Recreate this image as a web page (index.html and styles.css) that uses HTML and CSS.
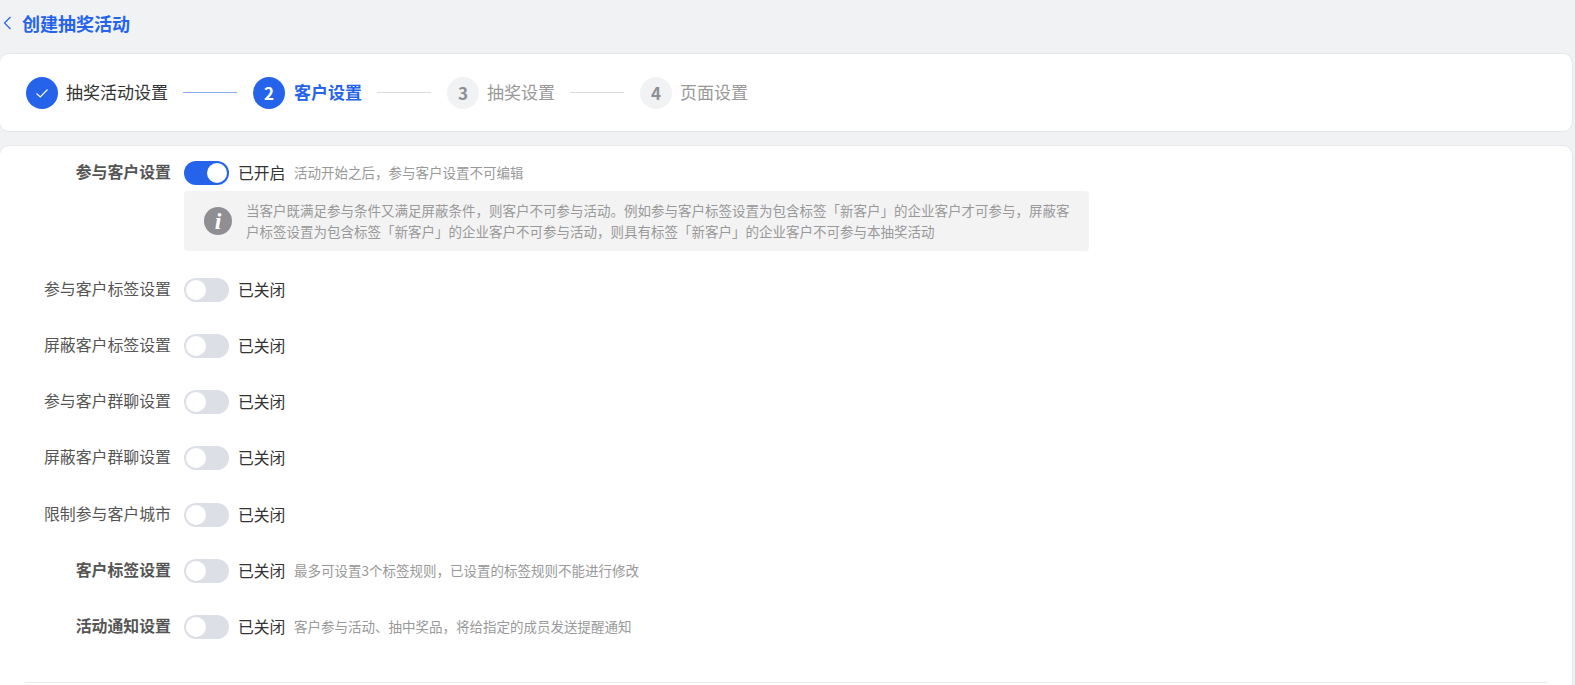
FILE: index.html
```html
<!DOCTYPE html>
<html lang="zh-CN">
<head>
<meta charset="utf-8">
<title>创建抽奖活动</title>
<link rel="stylesheet" href="styles.css">
</head>
<body>
<header class="page-head">
  <svg class="back" width="9" height="14" viewBox="0 0 9 14"><path d="M7.5 1 1.5 7l6 6" fill="none" stroke="#2563eb" stroke-width="1.2"/></svg>
  <h1 class="title">创建抽奖活动</h1>
</header>
<section class="card steps">
  <div class="step done">
    <span class="dot"><svg width="14" height="14" viewBox="0 0 14 14"><path d="M1.5 7.5 5.3 11 12.5 3.5" fill="none" stroke="#fff" stroke-width="1.1"/></svg></span>
    <span class="step-name">抽奖活动设置</span>
  </div>
  <i class="line line-on"></i>
  <div class="step active"><span class="dot">2</span><span class="step-name">客户设置</span></div>
  <i class="line"></i>
  <div class="step"><span class="dot">3</span><span class="step-name">抽奖设置</span></div>
  <i class="line"></i>
  <div class="step"><span class="dot">4</span><span class="step-name">页面设置</span></div>
</section>
<main class="card form">
  <div class="row first">
    <label class="label strong">参与客户设置</label>
    <span class="switch on"></span><span class="state">已开启</span><span class="hint">活动开始之后，参与客户设置不可编辑</span>
  </div>
  <div class="notice">
    <span class="info-icon">i</span>
    <p class="notice-text">当客户既满足参与条件又满足屏蔽条件，则客户不可参与活动。例如参与客户标签设置为包含标签「新客户」的企业客户才可参与，屏蔽客户标签设置为包含标签「新客户」的企业客户不可参与活动，则具有标签「新客户」的企业客户不可参与本抽奖活动</p>
  </div>
  <div class="row"><label class="label">参与客户标签设置</label><span class="switch"></span><span class="state">已关闭</span></div>
  <div class="row"><label class="label">屏蔽客户标签设置</label><span class="switch"></span><span class="state">已关闭</span></div>
  <div class="row"><label class="label">参与客户群聊设置</label><span class="switch"></span><span class="state">已关闭</span></div>
  <div class="row"><label class="label">屏蔽客户群聊设置</label><span class="switch"></span><span class="state">已关闭</span></div>
  <div class="row"><label class="label">限制参与客户城市</label><span class="switch"></span><span class="state">已关闭</span></div>
  <div class="row"><label class="label strong">客户标签设置</label><span class="switch"></span><span class="state">已关闭</span><span class="hint">最多可设置3个标签规则，已设置的标签规则不能进行修改</span></div>
  <div class="row"><label class="label strong">活动通知设置</label><span class="switch"></span><span class="state">已关闭</span><span class="hint">客户参与活动、抽中奖品，将给指定的成员发送提醒通知</span></div>
  <hr class="divider">
</main>
</body>
</html>
```
FILE: styles.css
```css
* { box-sizing: border-box; }
html, body { height: 100%; }
body {
  margin: 0;
  height: 685px;
  overflow: hidden;
  background: #f1f2f4;
  font-family: "Noto Sans CJK SC", "Noto Sans", sans-serif;
  color: #333;
}
.page-head {
  height: 53px;
  display: flex;
  align-items: center;
  padding: 0 0 7px 3px;
  gap: 10px;
}
.back { flex: none; }
.title {
  margin: 0;
  font-size: 18px;
  line-height: 24px;
  font-weight: 700;
  color: #2563eb;
}
.card {
  width: 1574px;
  margin-left: -1px;
  background: #fff;
  border: 1px solid #e6e7eb;
  border-radius: 10px;
}
.steps {
  height: 79px;
  display: flex;
  align-items: center;
  padding-left: 26px;
  margin-bottom: 13px;
}
.step { display: flex; align-items: center; gap: 8px; }
.step.active { gap: 9px; }
.dot {
  width: 32px;
  height: 32px;
  border-radius: 50%;
  background: #f1f2f4;
  color: #8c8f96;
  display: flex;
  align-items: center;
  justify-content: center;
  font-size: 17px;
  font-weight: 700;
}
.step-name { font-size: 17px; line-height: 24px; padding-bottom: 2px; color: #999; }
.step.done .dot, .step.active .dot { background: #2563eb; color: #fff; }
.step.done .step-name { color: #333; }
.step.active .step-name { color: #2563eb; font-weight: 700; }
.line {
  width: 54px;
  height: 1px;
  margin: 0 16px 0 15px;
  background: #d9dce3;
}
.line-on { background: #8aa9f5; }
.form { height: 560px; padding-top: 15px; overflow: hidden; }
.row {
  display: flex;
  align-items: center;
  height: 24px;
  margin-bottom: 32.25px;
}
.row.first { margin-bottom: 6px; }
.label {
  width: 171px;
  text-align: right;
  font-size: 15.9px;
  line-height: 24px;
  padding-bottom: 2px;
  color: #555;
  flex: none;
}
.label.strong { font-weight: 700; }
.switch {
  position: relative;
  flex: none;
  width: 45px;
  height: 24px;
  margin-left: 13px;
  border-radius: 12px;
  background: #dcdfe6;
}
.switch::after {
  content: "";
  position: absolute;
  top: 2px;
  left: 2px;
  width: 20px;
  height: 20px;
  border-radius: 50%;
  background: #fff;
}
.switch.on { background: #2563eb; }
.switch.on::after { left: 23px; }
.state { margin-left: 9px; font-size: 15.8px; line-height: 24px; color: #333; flex: none; }
.hint { margin-left: 8.5px; font-size: 13.5px; line-height: 24px; padding-bottom: 2px; color: #999; }
.notice {
  display: flex;
  align-items: center;
  width: 905px;
  height: 60px;
  margin: 0 0 26.5px 184px;
  padding: 0 16px 0 20px;
  border-radius: 4px;
  background: #f3f3f4;
}
.info-icon {
  flex: none;
  width: 28px;
  height: 28px;
  margin-right: 14px;
  border-radius: 50%;
  background: #8e8e93;
  color: #fff;
  font: italic 700 24px/28px "Liberation Serif", serif;
  text-align: center;
}
.notice-text { margin: 0; font-size: 13.5px; line-height: 21px; color: #999; }
.divider {
  width: 1522px;
  height: 1px;
  margin: 42.5px 0 0 25px;
  border: 0;
  background: #eaebef;
}
```
